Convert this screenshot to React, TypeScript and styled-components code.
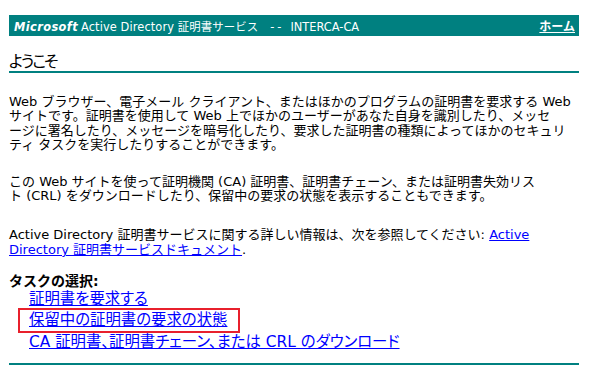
import styled, { createGlobalStyle } from 'styled-components';

const Teal = '#008080';
const LinkBlue = '#0000ff';
const FontStack = '"DejaVu Sans", "Noto Sans CJK JP", sans-serif';

const GlobalStyle = createGlobalStyle`
	html, body {
		margin: 0;
		padding: 0;
		background: #ffffff;
	}
	body {
		font-family: ${FontStack};
		color: #000000;
	}
`;

export default function App() {
	return (
		<>
			<GlobalStyle />
			<S.Page>
				<S.HeaderBar>
					<S.HeaderTitle>
						<S.Brand>Microsoft</S.Brand>
						<S.ServiceName>Active Directory 証明書サービス</S.ServiceName>
						<S.Separator>--</S.Separator>
						<S.CaName>INTERCA-CA</S.CaName>
					</S.HeaderTitle>
					<S.HomeLink href="#">ホーム</S.HomeLink>
				</S.HeaderBar>

				<S.Heading>ようこそ</S.Heading>

				<S.Paragraph $top={22}>
					Web ブラウザー、電子メール クライアント、またはほかのプログラムの証明書を要求する Web
					<br />
					サイトです。証明書を使用して Web 上でほかのユーザーがあなた自身を識別したり、メッセ
					<br />
					ージに署名したり、メッセージを暗号化したり、要求した証明書の種類によってほかのセキュリ
					<br />
					ティ タスクを実行したりすることができます。
				</S.Paragraph>

				<S.Paragraph $top={22}>
					この Web サイトを使って証明機関 (CA) 証明書、証明書チェーン、または証明書失効リス
					<br />
					ト (CRL) をダウンロードしたり、保留中の要求の状態を表示することもできます。
				</S.Paragraph>

				<S.Paragraph $top={25}>
					Active Directory 証明書サービスに関する詳しい情報は、次を参照してください:{' '}
					<S.TextLink href="#">
						Active
						<br />
						Directory 証明書サービスドキュメント
					</S.TextLink>
					.
				</S.Paragraph>

				<S.TaskSection>
					<S.TaskTitle>タスクの選択:</S.TaskTitle>
					<S.TaskList>
						<S.TaskItem>
							<S.TaskLink href="#">証明書を要求する</S.TaskLink>
						</S.TaskItem>
						<S.TaskItem $marked>
							<S.TaskLink href="#">保留中の証明書の要求の状態</S.TaskLink>
						</S.TaskItem>
						<S.TaskItem>
							<S.TaskLink href="#">CA 証明書、証明書チェーン、または CRL のダウンロード</S.TaskLink>
						</S.TaskItem>
					</S.TaskList>
				</S.TaskSection>

				<S.FooterRule />
			</S.Page>
		</>
	);
}

namespace S {
	export const Page = styled.div`
		width: 570px;
		margin: 15px 0 0 9px;
	`;

	export const HeaderBar = styled.div`
		height: 21px;
		background-color: ${Teal};
		display: flex;
		align-items: center;
		justify-content: space-between;
		padding: 0 4px 0 5px;
		color: #ffffff;
	`;

	export const HeaderTitle = styled.div`
		display: flex;
		align-items: baseline;
		font-size: 11.4px;
		white-space: nowrap;
	`;

	export const Brand = styled.span`
		font-family: Verdana, "DejaVu Sans", sans-serif;
		font-weight: bold;
		font-style: italic;
		letter-spacing: 0.4px;
		margin-right: 3px;
	`;

	export const ServiceName = styled.span`
		letter-spacing: 0.1px;
	`;

	export const Separator = styled.span`
		margin: 0 6px 0 12px;
		letter-spacing: 3px;
	`;

	export const CaName = styled.span`
		letter-spacing: 0;
	`;

	export const HomeLink = styled.a`
		color: #ffffff;
		font-weight: bold;
		font-size: 12px;
		text-decoration: underline;
	`;

	export const Heading = styled.div`
		margin-top: 16px;
		font-size: 16px;
		line-height: 19px;
		letter-spacing: -2px;
		font-feature-settings: 'palt';
		border-bottom: 2px solid ${Teal};
	`;

	export const Paragraph = styled.p<{ $top: number }>`
		margin: ${({ $top }) => $top}px 0 0;
		font-size: 13px;
		line-height: 14.4px;
		white-space: nowrap;
	`;

	export const TextLink = styled.a`
		color: ${LinkBlue};
		text-decoration: underline;
	`;

	export const TaskSection = styled.div`
		margin-top: 16px;
	`;

	export const TaskTitle = styled.div`
		font-size: 14px;
		font-weight: bold;
		line-height: 17px;
	`;

	export const TaskList = styled.div`
		display: flex;
		flex-direction: column;
		align-items: flex-start;
	`;

	export const TaskItem = styled.div<{ $marked?: boolean }>`
		padding: ${({ $marked }) => ($marked ? '1px 11px 2px 9px' : '0 0 0 20px')};
		border: ${({ $marked }) => ($marked ? '2px solid #e8202c' : 'none')};
		margin-left: ${({ $marked }) => ($marked ? '9px' : '0')};
		line-height: 17px;
	`;

	export const TaskLink = styled.a`
		color: ${LinkBlue};
		font-size: 15.4px;
		font-feature-settings: 'palt';
		text-decoration: underline;
		white-space: nowrap;
	`;

	export const FooterRule = styled.div`
		margin-top: 12px;
		height: 2px;
		background-color: ${Teal};
	`;
}
